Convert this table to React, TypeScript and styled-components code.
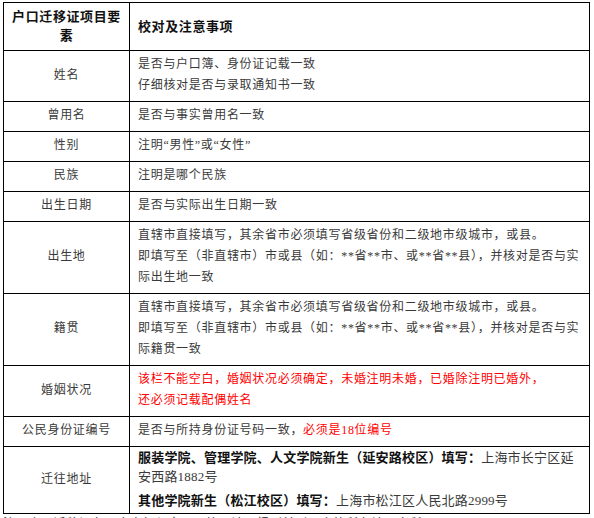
import React from "react";
import styled, { createGlobalStyle } from "styled-components";

type Part = { text: string; tone?: "red" | "bold" };
type Row = { label: string; paras: Part[][]; tight?: boolean };

const rows: Row[] = [
  {
    label: "姓名",
    paras: [
      [{ text: "是否与户口簿、身份证记载一致" }],
      [{ text: "仔细核对是否与录取通知书一致" }]
    ]
  },
  { label: "曾用名", paras: [[{ text: "是否与事实曾用名一致" }]] },
  { label: "性别", paras: [[{ text: "注明“男性”或“女性”" }]] },
  { label: "民族", paras: [[{ text: "注明是哪个民族" }]] },
  { label: "出生日期", paras: [[{ text: "是否与实际出生日期一致" }]] },
  {
    label: "出生地",
    paras: [
      [{ text: "直辖市直接填写，其余省市必须填写省级省份和二级地市级城市，或县。" }],
      [{ text: "即填写至（非直辖市）市或县（如：**省**市、或**省**县），并核对是否与实际出生地一致" }]
    ]
  },
  {
    label: "籍贯",
    paras: [
      [{ text: "直辖市直接填写，其余省市必须填写省级省份和二级地市级城市，或县。" }],
      [{ text: "即填写至（非直辖市）市或县（如：**省**市、或**省**县），并核对是否与实际籍贯一致" }]
    ]
  },
  {
    label: "婚姻状况",
    paras: [
      [{ text: "该栏不能空白，婚姻状况必须确定，未婚注明未婚，已婚除注明已婚外，", tone: "red" }],
      [{ text: "还必须记载配偶姓名", tone: "red" }]
    ]
  },
  {
    label: "公民身份证编号",
    paras: [
      [
        { text: "是否与所持身份证号码一致，" },
        { text: "必须是18位编号", tone: "red" }
      ]
    ]
  },
  {
    label: "迁往地址",
    tight: true,
    paras: [
      [
        { text: "服装学院、管理学院、人文学院新生（延安路校区）填写：", tone: "bold" },
        { text: "上海市长宁区延安西路1882号" }
      ],
      [
        { text: "其他学院新生（松江校区）填写：", tone: "bold" },
        { text: "上海市松江区人民北路2999号" }
      ]
    ]
  }
];

export default function App() {
  return (
    <>
      <GlobalStyle />
      <Page>
        <Table>
          <colgroup>
            <col style={{ width: 126 }} />
            <col />
          </colgroup>
          <thead>
            <tr>
              <HeadCell align="center">户口迁移证项目要素</HeadCell>
              <HeadCell align="left">校对及注意事项</HeadCell>
            </tr>
          </thead>
          <tbody>
            {rows.map((row) => (
              <tr key={row.label}>
                <LabelCell>{row.label}</LabelCell>
                <NoteCell $tight={row.tight}>
                  {row.paras.map((para, i) => (
                    <Para key={i} $spaced={!!row.tight && i > 0}>
                      {para.map((part, j) => (
                        <Span key={j} $tone={part.tone}>
                          {part.text}
                        </Span>
                      ))}
                    </Para>
                  ))}
                </NoteCell>
              </tr>
            ))}
          </tbody>
        </Table>
        <Footnote>注：户口迁移证各项内容如与实际不符，请于报到前到原户籍所在地派出所更正。</Footnote>
      </Page>
    </>
  );
}

const GlobalStyle = createGlobalStyle`
  html, body {
    margin: 0;
    padding: 0;
    background: #ffffff;
    overflow: hidden;
  }
  body {
    font-family: "Liberation Serif", "Noto Sans CJK SC", serif;
  }
`;

const Page = styled.div`
  padding: 2px 0 0 3px;
`;

const Table = styled.table`
  width: 587px;
  border-collapse: collapse;
  table-layout: fixed;
  border: 1px solid #000000;
`;

const HeadCell = styled.th<{ align: "left" | "center" }>`
  border: 1px solid #000000;
  padding: 4px 8px 5px 8px;
  text-align: ${(p) => p.align};
  vertical-align: middle;
  font-size: 13px;
  font-weight: bold;
  line-height: 19px;
  letter-spacing: 0.6px;
  color: #111111;
`;

const LabelCell = styled.td`
  border: 1px solid #000000;
  padding: 3px 4px 5px 4px;
  text-align: center;
  vertical-align: middle;
  font-size: 12px;
  line-height: 21px;
  letter-spacing: 0.7px;
  color: #3a3a3a;
`;

const NoteCell = styled.td<{ $tight?: boolean }>`
  border: 1px solid #000000;
  padding: ${(p) => (p.$tight ? "1px 8px 3px 8px" : "3px 8px 5px 8px")};
  text-align: left;
  vertical-align: middle;
  font-size: ${(p) => (p.$tight ? "13px" : "12px")};
  line-height: ${(p) => (p.$tight ? "19px" : "21px")};
  letter-spacing: ${(p) => (p.$tight ? "0.2px" : "0.7px")};
  color: #3a3a3a;
`;

const Para = styled.p<{ $spaced?: boolean }>`
  margin: ${(p) => (p.$spaced ? "5px 0 0 0" : "0")};
`;

const Span = styled.span<{ $tone?: "red" | "bold" }>`
  color: ${(p) =>
    p.$tone === "red" ? "#ff0000" : p.$tone === "bold" ? "#111111" : "inherit"};
  font-weight: ${(p) => (p.$tone === "bold" ? "bold" : "normal")};
`;

const Footnote = styled.p`
  margin: 0;
  padding-top: 1px;
  font-size: 12px;
  line-height: 18px;
  letter-spacing: 0.7px;
  color: #222222;
`;
